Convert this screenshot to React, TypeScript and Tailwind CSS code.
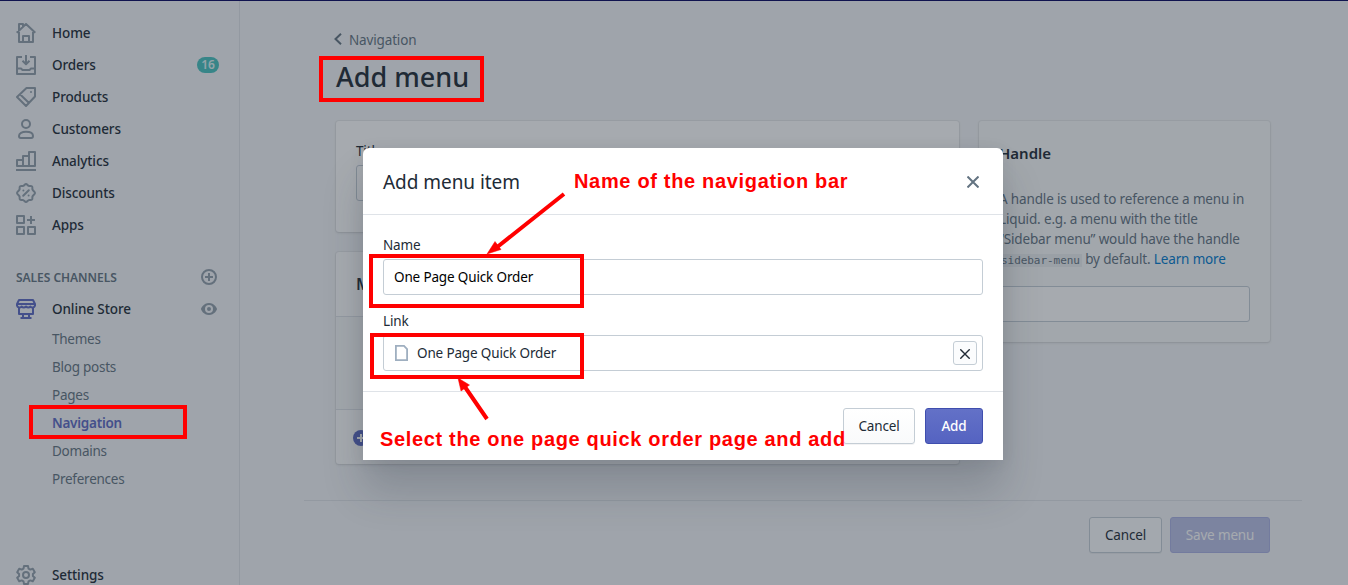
import React from "react";

const iconProps = {
  width: 20,
  height: 20,
  viewBox: "0 0 20 20",
  fill: "none",
  stroke: "currentColor",
  strokeWidth: 2,
  strokeLinejoin: "round" as const,
};

const HomeIcon = () => (
  <svg {...iconProps}>
    <path d="M3 11V1h4v3M.7 9.800 10 1l9.300 8.800M3 9v10h14V9M7 19v-6h6v6" />
  </svg>
);
const OrdersIcon = () => (
  <svg {...iconProps}>
    <path d="M6 2H1v17h18V2h-5M1 13.500h4l1.500 1.500h7l1.500-1.500h4M10 0v9M6.500 5.800 10 9.200l3.500-3.400" />
  </svg>
);
const ProductsIcon = () => (
  <svg {...iconProps}>
    <path d="M10.500 1H19v8.500L10 19l-9-9zM4 7.200l9 8.800" />
    <circle cx="15" cy="5" r="1" fill="currentColor" stroke="none" />
  </svg>
);
const CustomersIcon = () => (
  <svg {...iconProps}>
    <circle cx="10" cy="5" r="4" />
    <path d="M3 17c0-2.800 3-4.200 7-4.200s7 1.400 7 4.200c0 1.200-.600 2-1.800 2H4.800C3.600 19 3 18.200 3 17z" />
  </svg>
);
const AnalyticsIcon = () => (
  <svg {...iconProps}>
    <path d="M1 15V9h6v6zM7 15V5h6v10M13 15V1h6v14zM7 15h6M0 19h20" />
  </svg>
);
const DiscountsIcon = () => (
  <svg {...iconProps} strokeLinecap="round">
    <path d="M10 1c1.100 0 1.700 1.500 2.700 1.900s2.500-.300 3.300.500.100 2.300.500 3.300S19 8.900 19 10s-2.100 2.300-2.500 3.300.300 2.500-.500 3.300-2.300.100-3.300.500S11.100 19 10 19s-1.700-1.500-2.700-1.900-2.500.300-3.300-.500-.100-2.300-.500-3.300S1 11.100 1 10s2.100-2.300 2.500-3.300-.300-2.500.500-3.300 2.300-.100 3.300-.5S8.900 1 10 1z" />
    <path d="m12.800 7.200-5.600 5.600M7.400 7.400h.01M12.600 12.600h.01" />
  </svg>
);
const AppsIcon = () => (
  <svg {...iconProps}>
    <path d="M1 1h7v7H1zM1 12h7v7H1zM12 12h7v7h-7zM15 1v8M11 5h8" />
  </svg>
);
const StoreIcon = () => (
  <svg {...iconProps}>
    <path d="M3 1h14l2 4v1.500a2.500 2.500 0 0 1-4.500 1 3 3 0 0 1-4.500 0 3 3 0 0 1-4.500 0A2.500 2.500 0 0 1 1 6.500V5zM1 5h18M3 8.500V15h14V8.500M7 15v3M13 15v3M4.500 19h11" />
  </svg>
);
const GearIcon = () => (
  <svg {...iconProps}>
    <path d="M8 1h4l.5 2.600 1.800 1L16.800 3.700l2 3.500L16.900 9v2l1.900 1.800-2 3.500-2.500-.900-1.800 1L12 19H8l-.5-2.600-1.800-1-2.500.900-2-3.500L3.100 11V9L1.200 7.200l2-3.500 2.500.900 1.800-1z" />
    <circle cx="10" cy="10" r="3" />
  </svg>
);
const CirclePlus = () => (
  <svg width="16" height="16" viewBox="0 0 16 16" fill="none" stroke="currentColor" strokeWidth="2">
    <circle cx="8" cy="8" r="7" />
    <path d="M8 4v8M4 8h8" />
  </svg>
);
const EyeIcon = () => (
  <svg width="16" height="12" viewBox="0 0 16 12">
    <path
      fill="currentColor"
      fillRule="evenodd"
      d="M8 0C2.600 0 0 5 0 6s2.600 6 8 6 8-5 8-6-2.600-6-8-6zm0 10a4 4 0 1 1 0-8 4 4 0 0 1 0 8zm0-6a2 2 0 1 0 0 4 2 2 0 0 0 0-4z"
    />
  </svg>
);

const navItems = [
  { label: "Home", icon: HomeIcon },
  { label: "Orders", icon: OrdersIcon, badge: "16" },
  { label: "Products", icon: ProductsIcon },
  { label: "Customers", icon: CustomersIcon },
  { label: "Analytics", icon: AnalyticsIcon },
  { label: "Discounts", icon: DiscountsIcon },
  { label: "Apps", icon: AppsIcon },
];

const storeLinks = ["Themes", "Blog posts", "Pages", "Navigation", "Domains", "Preferences"];

function Sidebar() {
  return (
    <nav className="flex h-full w-60 shrink-0 flex-col border-r border-[#dfe3e8] pl-4 pr-5 pt-4 text-[13.5px] font-medium tracking-[-0.1px] text-[#212b36]">
      {navItems.map(({ label, icon: Icon, badge }) => (
        <div key={label} className="flex h-8 shrink-0 items-center">
          <span className="mr-4 text-[#919eab]"><Icon /></span>
          <span className="pt-px">{label}</span>
          {badge && (
            <span className="ml-auto flex h-4 w-[22px] items-center justify-center rounded-full bg-[#47c1bf] text-[12px] font-semibold tracking-normal text-[#e0f5f5]">
              {badge}
            </span>
          )}
        </div>
      ))}
      <div className="mt-5 flex h-8 shrink-0 items-center justify-between pr-0.5 text-[12px] font-semibold tracking-[-0.04px] text-[#637381]">
        <span className="pt-0.5">SALES CHANNELS</span>
        <span className="text-[#919eab]"><CirclePlus /></span>
      </div>
      <div className="flex h-8 shrink-0 items-center pr-0.5">
        <span className="mr-4 text-[#5c6ac4]"><StoreIcon /></span>
        <span className="pt-px">Online Store</span>
        <span className="ml-auto text-[#919eab]"><EyeIcon /></span>
      </div>
      {storeLinks.map((label) => (
        <div
          key={label}
          className={
            label === "Navigation"
              ? "flex h-7 shrink-0 items-center pl-9 pt-px font-semibold tracking-[-0.25px] text-[#5c6ac4]"
              : "flex h-7 shrink-0 items-center pl-9 pt-px font-normal tracking-[-0.25px] text-[#637381]"
          }
        >
          {label}
        </div>
      ))}
      <div className="mt-[66px] flex h-8 shrink-0 items-center">
        <span className="mr-4 text-[#919eab]"><GearIcon /></span>
        <span className="pt-px">Settings</span>
      </div>
    </nav>
  );
}

const card = "rounded-[3px] bg-white shadow-[0_0_0_1px_rgba(63,63,68,0.05),0_1px_3px_rgba(63,63,68,0.15)]";

function MenuPage() {
  return (
    <main className="flex flex-1 flex-col pl-16 pr-[46px] text-[13.5px] tracking-[-0.15px] text-[#637381]">
      <div className="flex flex-col pl-8">
        <div className="mt-[29px] flex h-5 items-center">
          <svg width="8" height="12" viewBox="0 0 8 12" fill="none" stroke="currentColor" strokeWidth="2" className="-ml-0.5 mr-[7px] -mt-0.5">
            <path d="M7 .8 1.500 6 7 11.200" />
          </svg>
          <span className="pt-px">Navigation</span>
        </div>
        <h1 className="mt-1 h-[46px] text-[27px] font-medium leading-[46px] tracking-normal text-[#212b36]">Add menu</h1>
        <div className="mt-[21px] flex items-start gap-5">
          <div className="flex w-[623px] flex-col gap-5">
            <section className={`${card} h-[111px] px-5 pt-5`}>
              <div className="leading-5 text-[#212b36]">Title</div>
              <div className="mt-1 h-9 rounded-[3px] border border-[#c4cdd5] bg-white" />
            </section>
            <section className={`${card} h-[212px]`}>
              <h2 className="h-[65px] border-b border-[#dfe3e8] px-5 pt-5 text-[16px] font-semibold text-[#212b36]">Menu items</h2>
              <div className="h-[92px] bg-[#f9fafb]" />
              <div className="flex h-[55px] items-center border-t border-[#dfe3e8] px-[17px] pt-0.5 text-[#5c6ac4]">
                <svg width="16" height="16" viewBox="0 0 16 16">
                  <circle cx="8" cy="8" r="8" fill="currentColor" />
                  <path d="M8 4v8M4 8h8" stroke="white" strokeWidth="2" />
                </svg>
              </div>
            </section>
          </div>
          <section className="h-[221px] w-[291px] rounded-[3px] bg-[#f9fafb] px-5 pt-5 shadow-[0_0_0_1px_rgba(63,63,68,0.05),0_1px_3px_rgba(63,63,68,0.15)]">
            <h2 className="text-[15px] font-semibold leading-6 tracking-normal text-[#212b36]">Handle</h2>
            <p className="mt-6 h-20 whitespace-nowrap leading-5">
              A handle is used to reference a menu in<br />
              Liquid. e.g. a menu with the title<br />
              “Sidebar menu” would have the handle<br />
              <code className="bg-[#ebeef0] px-0.5 font-['DejaVu_Sans_Mono',monospace] text-[11px] tracking-[-0.05px]">sidebar-menu</code> by default.{" "}
              <span className="text-[#007ace]">Learn more</span>
            </p>
            <div className="mt-[17px] h-9 rounded-[3px] border border-[#c4cdd5] bg-white" />
          </section>
        </div>
      </div>
      <footer className="mt-[36px] flex justify-end gap-2 border-t border-[#dfe3e8] pr-8 pt-4">
        <div className="flex h-9 w-[73px] items-center justify-center rounded-[3px] border border-[#c4cdd5] bg-[#fbfcfd] pt-px text-[#212b36] shadow-[0_1px_0_rgba(22,29,37,0.05)]">Cancel</div>
        <div className="flex h-9 w-[100px] items-center justify-center rounded-[3px] border border-[#aab1e3] bg-[#bac0e6] pt-px text-white">Save menu</div>
      </footer>
    </main>
  );
}

function MenuItemDialog() {
  return (
    <div role="dialog" className="absolute left-[363px] top-[148px] flex h-[312px] w-[640px] flex-col rounded-t-[6px] bg-white text-[13.5px] tracking-[-0.15px] text-[#212b36] shadow-[0_31px_41px_0_rgba(32,42,53,0.2),0_2px_16px_0_rgba(32,42,54,0.08)]">
      <header className="flex h-[67px] shrink-0 items-center justify-between border-b border-[#dfe3e8] pl-5 pr-6 pt-0.5">
        <h2 className="text-[19px] tracking-[-0.05px]">Add menu item</h2>
        <svg width="12" height="12" viewBox="0 0 12 12" fill="none" stroke="#637381" strokeWidth="2">
          <path d="m.5.5 11 11M11.500.5l-11 11" />
        </svg>
      </header>
      <div className="flex h-[177px] shrink-0 flex-col border-b border-[#dfe3e8] px-5 pt-5">
        <label className="h-5 leading-[21px]">Name</label>
        <div className="mt-1 flex h-9 items-center rounded-[3px] border border-[#c4cdd5] px-2.5 pt-px text-black">One Page Quick Order</div>
        <label className="mt-4 h-5 leading-[21px]">Link</label>
        <div className="mt-1 flex h-9 items-center rounded-[3px] border border-[#c4cdd5] pl-[11px] pr-[5px]">
          <svg width="13" height="16" viewBox="0 0 13 16" fill="none" stroke="#9fafc0" strokeWidth="1.800" className="mr-[9px]">
            <path d="M.9.900h8.100l3.100 3.200v11H.9z" />
          </svg>
          <span className="pt-px">One Page Quick Order</span>
          <span className="ml-auto flex size-6 items-center justify-center rounded-[3px] border border-[#c4cdd5] bg-[#fbfcfd] pt-px">
            <svg width="10" height="10" viewBox="0 0 10 10" fill="none" stroke="#212b36" strokeWidth="1.400">
              <path d="m.3.300 9.400 9.400M9.700.300.300 9.700" />
            </svg>
          </span>
        </div>
      </div>
      <footer className="flex justify-end gap-2.5 px-5 pt-4">
        <button className="h-9 w-[72px] rounded-[3px] border border-[#c4cdd5] bg-linear-to-b from-white to-[#f9fafb] pt-px shadow-[0_1px_0_rgba(22,29,37,0.05)]">Cancel</button>
        <button className="h-9 w-[58px] rounded-[3px] border border-[#3f4eae] bg-linear-to-b from-[#6371c7] to-[#5563c1] pt-px font-medium text-white">Add</button>
      </footer>
    </div>
  );
}

function Annotations() {
  return (
    <>
      <div className="absolute left-[319px] top-[56px] h-[46px] w-[165px] border-4 border-[#ff0000]" />
      <div className="absolute left-[29px] top-[405px] h-[34px] w-[158px] border-4 border-[#ff0000]" />
      <div className="absolute left-[369px] top-[254px] h-[54px] w-[215px] border-4 border-[#ff0000]" />
      <div className="absolute left-[370px] top-[333px] h-[46px] w-[214px] border-4 border-[#ff0000]" />
      <svg className="absolute left-0 top-0" width="1348" height="585" fill="#ff0000" stroke="#ff0000">
        <path d="M564 194 496 248M487 419 465 387" strokeWidth="4" />
        <path d="m487 254 8-12.500 6 8zM458 378l11.500 7-8.500 6z" strokeWidth="0.500" />
      </svg>
      <div className="absolute left-[574px] top-[168px] whitespace-nowrap font-['Liberation_Sans',sans-serif] text-[20px] font-bold leading-[26px] tracking-[0.67px] text-[#ff0000]">Name of the navigation bar</div>
      <div className="absolute left-[380px] top-[426px] whitespace-nowrap font-['Liberation_Sans',sans-serif] text-[20px] font-bold leading-[26px] tracking-[0.66px] text-[#ff0000]">Select the one page quick order page and add</div>
    </>
  );
}

export default function App() {
  return (
    <div className="relative h-[585px] w-[1348px] overflow-hidden bg-[#f4f6f8] font-['Noto_Sans',sans-serif]">
      <div className="flex h-full pt-px">
        <Sidebar />
        <MenuPage />
      </div>
      <div className="absolute inset-0 border-t border-[#10134f] bg-[#212b36]/40" />
      <MenuItemDialog />
      <Annotations />
    </div>
  );
}
